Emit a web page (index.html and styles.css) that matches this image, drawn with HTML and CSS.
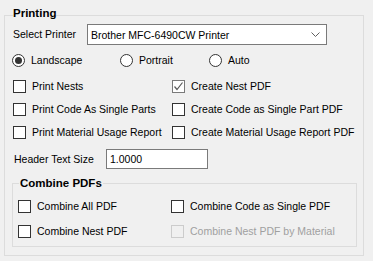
FILE: index.html
```html
<!DOCTYPE html>
<html lang="en">
<head>
    <meta charset="UTF-8">
    <title>Printing</title>
    <link rel="stylesheet" href="styles.css">
</head>
<body>
    <fieldset class="group">
        <legend class="group-title">Printing</legend>

        <div class="printer-row">
            <span class="field-label printer-label">Select Printer</span>
            <div class="combo">
                <span class="combo-text">Brother MFC-6490CW Printer</span>
                <svg class="combo-arrow" width="9" height="5" viewBox="0 0 9 5">
                    <polyline points="0.5,0.5 4.5,4.5 8.5,0.5" fill="none" stroke="#606060" stroke-width="1"/>
                </svg>
            </div>
        </div>

        <div class="radio-row">
            <label class="radio-item landscape"><span class="radio selected"></span>Landscape</label>
            <label class="radio-item portrait"><span class="radio"></span>Portrait</label>
            <label class="radio-item"><span class="radio"></span>Auto</label>
        </div>

        <div class="check-grid">
            <label class="check"><span class="box"></span>Print Nests</label>
            <label class="check"><span class="box checked"><svg width="11" height="11" viewBox="0 0 11 11"><polyline points="1.5,5.5 4,8.5 9.5,1.5" fill="none" stroke="#5a5a5a" stroke-width="1.2"/></svg></span>Create Nest PDF</label>
            <label class="check"><span class="box"></span>Print Code As Single Parts</label>
            <label class="check"><span class="box"></span>Create Code as Single Part PDF</label>
            <label class="check"><span class="box"></span>Print Material Usage Report</label>
            <label class="check"><span class="box"></span>Create Material Usage Report PDF</label>
        </div>

        <div class="header-row">
            <span class="field-label header-label">Header Text Size</span>
            <div class="textbox">1.0000</div>
        </div>

        <fieldset class="group inner">
            <legend class="group-title">Combine PDFs</legend>
            <div class="check-grid combine-grid">
                <label class="check"><span class="box"></span>Combine All PDF</label>
                <label class="check"><span class="box"></span>Combine Code as Single PDF</label>
                <label class="check"><span class="box"></span>Combine Nest PDF</label>
                <label class="check disabled"><span class="box"></span>Combine Nest PDF by Material</label>
            </div>
        </fieldset>
    </fieldset>
</body>
</html>
```

FILE: styles.css
```css
body {
    margin: 0;
    background-color: #f0f0f0;
    font-family: "Liberation Sans", Arial, sans-serif;
    font-size: 10.5px;
    color: #000;
}

/* Group boxes */
.group {
    margin: 5px 9px 0 4px;
    padding: 0 6px 8px 8px;
    border: 1px solid #dcdcdc;
    min-width: 0;
}

.group-title {
    padding: 1px 0 6px 0;
    font-size: 11.5px;
    font-weight: bold;
    line-height: 14px;
}

.group.inner {
    margin: 7px 0 0 -1px;
    padding: 0 6px 8px 6px;
}

.group.inner .group-title {
    padding: 0 1px 1px 1px;
}

/* Printer select row */
.printer-row {
    display: flex;
    align-items: center;
    margin-top: -2px;
    height: 21px;
}

.field-label {
    line-height: 13px;
}

.printer-label {
    width: 74px;
}

.combo {
    width: 240px;
    height: 21px;
    box-sizing: border-box;
    border: 1px solid #7a7a7a;
    background-color: #fff;
    display: flex;
    align-items: center;
    justify-content: space-between;
    padding: 0 6px 0 3px;
}

.combo-arrow {
    display: block;
}

/* Orientation radios */
.radio-row {
    display: flex;
    margin: 9px 0 0 -1px;
    height: 13px;
}

.radio-item {
    display: flex;
    align-items: center;
    gap: 6px;
    line-height: 13px;
}

.radio-item.landscape {
    width: 108px;
}

.radio-item.portrait {
    width: 89px;
}

.radio {
    width: 13px;
    height: 13px;
    box-sizing: border-box;
    border: 1px solid #333;
    border-radius: 50%;
    background-color: #fff;
    display: flex;
    align-items: center;
    justify-content: center;
}

.radio.selected::after {
    content: "";
    width: 7px;
    height: 7px;
    border-radius: 50%;
    background-color: #333;
}

/* Checkboxes */
.check-grid {
    display: grid;
    grid-template-columns: 159px auto;
    grid-auto-rows: 13px;
    row-gap: 10px;
    margin-top: 13px;
}

.check {
    display: flex;
    align-items: center;
    gap: 6px;
    line-height: 13px;
    white-space: nowrap;
}

.box {
    width: 13px;
    height: 13px;
    box-sizing: border-box;
    border: 1px solid #333;
    background-color: #fff;
    flex: none;
    display: flex;
    align-items: center;
    justify-content: center;
}

.box.checked {
    border-color: #7a7a7a;
}

.box svg {
    display: block;
}

.check.disabled {
    color: #a0a0a0;
}

.check.disabled .box {
    border-color: #cccccc;
    background-color: #f0f0f0;
}

/* Header text size row */
.header-row {
    display: flex;
    align-items: center;
    margin-top: 10px;
    height: 20px;
}

.header-label {
    width: 92px;
    padding-left: 1px;
}

.textbox {
    width: 102px;
    height: 20px;
    box-sizing: border-box;
    border: 1px solid #7a7a7a;
    background-color: #fff;
    padding: 0 3px;
    line-height: 18px;
}

/* Combine PDFs */
.combine-grid {
    grid-template-columns: 153px auto;
    row-gap: 12px;
    margin: 9px 0 0 -1px;
}
```
